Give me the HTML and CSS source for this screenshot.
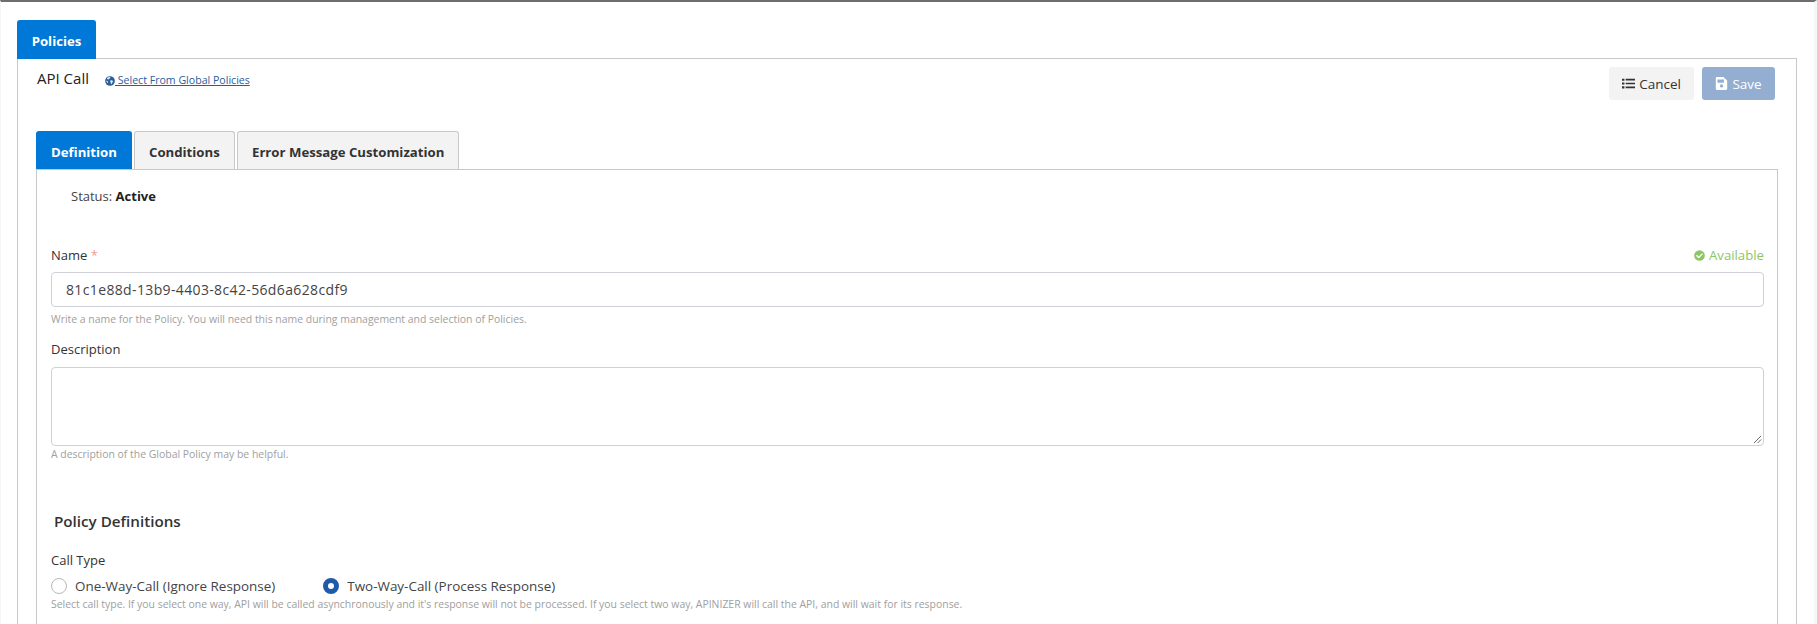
FILE: index.html
```html
<!DOCTYPE html>
<html lang="en">
<head>
<meta charset="utf-8">
<title>API Call</title>
<link rel="stylesheet" href="styles.css">
</head>
<body>
<div class="page">
  <nav class="tabs outer-tabs"><a class="tab active">Policies</a></nav>
  <section class="outer-panel">
    <header class="head">
      <div class="title-group">
        <h1 class="title">API Call</h1>
        <a class="global-link"><svg class="globe" viewBox="0 0 512 512"><circle cx="256" cy="256" r="248" fill="#2a5d9c"/><path fill="#e8eef6" d="M110 100c44-36 100-52 160-44 14 30-6 56-36 66-20 8-16 36-38 46-30 12-64 0-92-16zM290 220c40-12 84 2 112 28 14 36-6 78-36 104-24 22-32 54-60 66-18-30-4-64-12-94-24-18-40-76-4-104zM62 230c36 12 74 30 98 60 8 32-12 50-16 74-38-24-72-76-82-134z"/></svg> Select From Global Policies</a>
      </div>
      <div class="actions">
        <button class="btn btn-cancel" type="button"><svg class="btn-icon" viewBox="0 0 512 512"><path fill="#333" d="M0 64h96v80H0zM0 216h96v80H0zM0 368h96v80H0zM144 72h368v64H144zM144 224h368v64H144zM144 376h368v64H144z"/></svg>Cancel</button>
        <button class="btn btn-save" type="button"><svg class="btn-icon" viewBox="0 0 448 512"><path fill="#fff" d="M433 129L319 15c-9-9-21-15-34-15H48C21 0 0 21 0 48v416c0 27 21 48 48 48h352c27 0 48-21 48-48V163c0-13-5-25-15-34zM224 416a64 64 0 1 1 0-128 64 64 0 0 1 0 128zm96-304v100c0 7-5 12-12 12H76c-7 0-12-5-12-12V108c0-7 5-12 12-12h228c3 0 6 1 8 3l4 4c3 2 4 5 4 9z"/></svg>Save</button>
      </div>
    </header>

    <nav class="tabs inner-tabs">
      <a class="tab active">Definition</a>
      <a class="tab">Conditions</a>
      <a class="tab">Error Message Customization</a>
    </nav>

    <div class="inner-panel">
      <p class="status">Status: <b>Active</b></p>

      <div class="label-row name-row">
        <label class="label">Name <span class="req">*</span></label>
        <span class="available"><svg class="check" viewBox="0 0 512 512"><path fill="#8cc665" d="M504 256a248 248 0 1 1-496 0 248 248 0 0 1 496 0zM227 387l184-184c6-6 6-16 0-22l-23-23c-6-6-16-6-22 0L216 308l-70-70c-6-6-16-6-22 0l-23 23c-6 6-6 16 0 22l104 104c6 6 16 6 22 0z"/></svg>Available</span>
      </div>
      <div class="input">81c1e88d-13b9-4403-8c42-56d6a628cdf9</div>
      <p class="help">Write a name for the Policy. You will need this name during management and selection of Policies.</p>

      <label class="label desc-label">Description</label>
      <div class="textarea"><svg class="grip" viewBox="0 0 10 10"><path stroke="#555" stroke-width="1" d="M1 9L9 1M5 9L9 5"/></svg></div>
      <p class="help help-desc">A description of the Global Policy may be helpful.</p>

      <h2 class="section-title">Policy Definitions</h2>

      <label class="label">Call Type</label>
      <div class="radios">
        <span class="radio"><i class="dot"></i>One-Way-Call (Ignore Response)</span>
        <span class="radio"><i class="dot on"></i>Two-Way-Call (Process Response)</span>
      </div>
      <p class="help help-tight">Select call type. If you select one way, API will be called asynchronously and it's response will not be processed. If you select two way, APINIZER will call the API, and will wait for its response.</p>
    </div>
  </section>
</div>
</body>
</html>
```

FILE: styles.css
```css
* { box-sizing: border-box; }
html, body { margin: 0; height: 100%; overflow: hidden; background: #fff; }
body { font-family: "Open Sans", "Liberation Sans", sans-serif; font-size: 13px; color: #333; }

.page { border-top: 2px solid #6e6e6e; border-left: 1px solid #f5f6f6; border-right: 3px solid #f5f6f6; height: 624px; padding: 18px 17px 0 16px; overflow: hidden; }

.tabs { display: flex; gap: 2px; }
.tab { display: flex; align-items: center; height: 39px; padding: 1px 15px 0; font-size: 13.2px; font-weight: 700; white-space: nowrap; color: #333; background: #f3f3f3; border: 1px solid #c8c8c8; border-bottom: 0; border-radius: 3px 3px 0 0; }
.tab.active { background: #0078d7; border-color: #0078d7; color: #fff; }

.outer-tabs .tab { width: 79px; justify-content: center; padding: 1px 0 0; }
.outer-panel { margin-top: -1px; border: 1px solid #c8c8c8; border-bottom: 0; padding: 0 18px; height: 600px; }

.head { display: flex; justify-content: space-between; height: 72px; }
.title-group { display: flex; align-items: flex-start; padding: 9px 0 0 1px; }
.title { margin: 0; font-size: 15px; font-weight: 400; line-height: 20px; color: #222; }
.global-link { margin: 5px 0 0 16px; font-size: 10.6px; line-height: 14px; color: #2a5d9c; text-decoration: underline; display: flex; align-items: center; white-space: pre; }
.globe { width: 10px; height: 10px; margin: 2px 0 0 0; }

.actions { display: flex; gap: 8px; padding: 8px 3px 0 0; }
.btn { display: flex; align-items: center; justify-content: center; height: 33px; border: 0; border-radius: 3px; font: 400 13.5px "Open Sans", sans-serif; }
.btn-cancel { width: 85px; background: #f3f3f3; color: #333; }
.btn-save { width: 73px; background: #94aed2; color: #fff; }
.btn-icon { width: 13px; height: 13px; margin-right: 4px; }

.inner-tabs .tab { padding: 1px 14px 0; }
.inner-tabs .tab.active { width: 96px; }
.inner-tabs .tab:nth-child(2) { width: 101px; }
.inner-tabs .tab:nth-child(3) { width: 222px; }

.inner-panel { position: relative; z-index: 0; margin-top: -1px; border: 1px solid #c8c8c8; border-bottom: 0; padding: 0 13px 0 14px; height: 470px; width: 1742px; }

.status { margin: 17px 0 0 20px; line-height: 18px; font-size: 13px; color: #444; }
.status b { color: #222; }

.label { display: block; font-size: 13px; line-height: 18px; color: #333; }
.req { color: #f39a9a; }
.label-row { display: flex; justify-content: space-between; }
.name-row { margin-top: 41px; }
.available { display: flex; align-items: center; font-size: 13.2px; color: #8cc665; }
.check { width: 11px; height: 11px; margin-right: 4px; }

.input { margin-top: 8px; height: 35px; line-height: 33px; padding: 0 14px; width: 100%; border: 1px solid #d0d0d8; border-radius: 4px; font-size: 14px; color: #444; letter-spacing: 0.36px; }
.help { margin: 5px 0 0; font-size: 10.44px; line-height: 14px; color: #a0a0a0; }
.desc-label { margin-top: 14px; }
.textarea { position: relative; margin-top: 9px; height: 79px; width: 100%; border: 1px solid #d0d0d8; border-radius: 4px; }
.grip { position: absolute; right: 1px; bottom: 1px; width: 9px; height: 9px; }
.help-desc { margin-top: 1px; }

.section-title { margin: 50px 0 0 3px; font-size: 15.2px; line-height: 20px; font-weight: 600; color: #333; }
.section-title + .label { margin-top: 20px; }

.radios { display: flex; gap: 48px; margin-top: 8px; line-height: 18px; font-size: 13.45px; color: #444; }
.radio { display: flex; align-items: center; }
.dot { width: 16px; height: 16px; border-radius: 50%; border: 1px solid #b8b8b8; margin-right: 8px; background: #fff; }
.dot.on { border: 5px solid #1f5ba8; }
.help-tight { margin-top: 2px; }
```
